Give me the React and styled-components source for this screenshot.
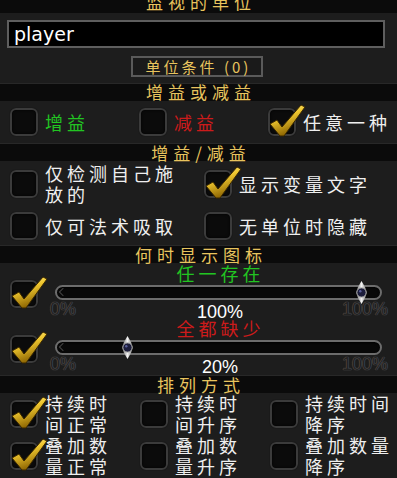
import React from "react"
import styled, { createGlobalStyle } from "styled-components"

const GlobalStyle = createGlobalStyle`
  html, body {
    margin: 0;
    padding: 0;
    background: #1d1d1d;
    overflow: hidden;
  }
  body {
    font-family: "Noto Sans CJK SC", "Noto Sans", sans-serif;
  }
`

const colors = {
  gold: "#e8c45e",
  white: "#efefef",
  green: "#22c422",
  red: "#cc1b1b",
  band: "#0b0b0b",
  box: "#0b0b0b"
}

const Page = styled.div`
  width: 397px;
  height: 478px;
  overflow: hidden;
  background: #1d1d1d;
  .inner {
    margin-top: -5px;
  }
`

const Header = styled.div`
  height: 18px;
  background: ${colors.band};
  border-top: 1px solid #282828;
  box-sizing: border-box;
  display: flex;
  justify-content: center;
  align-items: center;
  color: ${colors.gold};
  font-size: 17px;
  line-height: 17px;
  letter-spacing: 5px;
  padding-left: 5px;
  white-space: nowrap;
  margin-top: ${({ gap }) => gap || 0}px;
  span {
    position: relative;
    top: ${({ shift }) => shift || 0}px;
  }
`

const TextInput = styled.div`
  margin: 7px 0 0 7px;
  width: 378px;
  height: 28px;
  box-sizing: border-box;
  background: #000;
  border: 2px solid #5e5e5e;
  display: flex;
  align-items: center;
  padding-left: 5px;
  color: #fff;
  font-family: "DejaVu Sans", sans-serif;
  font-size: 19px;
`

const CondButton = styled.div`
  margin: 8px 0 0 131px;
  width: 132px;
  height: 21px;
  box-sizing: border-box;
  border: 2px solid #5a5a5a;
  background: #1a1a1a;
  color: ${colors.gold};
  font-size: 15px;
  letter-spacing: 3px;
  display: flex;
  align-items: center;
  justify-content: center;
  padding-left: 3px;
  white-space: nowrap;
`

const Grid = styled.div`
  display: grid;
  grid-template-columns: ${({ cols }) => cols};
  grid-auto-rows: ${({ rowH }) => rowH}px;
  padding-left: 10px;
`

const Cell = styled.div`
  display: flex;
  align-items: center;
  gap: 7px;
  padding-right: ${({ pr }) => pr || 0}px;
  min-width: 0;
`

const Label = styled.span`
  color: ${({ color }) => color || colors.white};
  font-size: 18px;
  line-height: 21px;
  letter-spacing: 4px;
  flex: 1;
  min-width: 0;
`

const Box = styled.span`
  position: relative;
  flex: none;
  width: 28px;
  height: 28px;
  box-sizing: border-box;
  border-radius: 6px;
  background: ${colors.box};
  border: 2px solid #3b3b3b;
  box-shadow: inset 0 0 3px #000, 0 0 1px #000;
  align-self: ${({ top }) => (top ? "flex-start" : "center")};
  margin-top: ${({ top }) => top || 0}px;
  svg {
    position: absolute;
    left: -1px;
    top: -8px;
  }
`

const CheckMark = () => (
  <svg width="38" height="37" viewBox="0 0 38 37">
    <defs>
      <linearGradient id="gold" x1="0" y1="0" x2="0.4" y2="1">
        <stop offset="0" stopColor="#fff6b0" />
        <stop offset="0.45" stopColor="#f0c830" />
        <stop offset="1" stopColor="#8a6200" />
      </linearGradient>
    </defs>
    <path
      d="M1 22 L8 18 L13 25 L32 3 L36 5 L15 34 L11 34 Z"
      fill="url(#gold)"
      stroke="#3a2800"
      strokeWidth="1"
      strokeLinejoin="round"
    />
  </svg>
)

const Check = ({ checked, top }) => (
  <Box top={top}>{checked && <CheckMark />}</Box>
)

const SliderRow = styled.div`
  display: flex;
  padding-left: 10px;
`

const SliderBlock = styled.div`
  flex: 1;
  margin: 0 15px 0 17px;
  display: flex;
  flex-direction: column;
`

const SliderTitle = styled.div`
  height: 20px;
  line-height: 20px;
  text-align: center;
  color: ${({ color }) => color};
  font-size: 18px;
  letter-spacing: 4px;
  padding-left: 4px;
  white-space: nowrap;
`

const Track = styled.div`
  position: relative;
  margin-top: 2px;
  height: 15px;
  box-sizing: border-box;
  border-radius: 8px;
  background: #080808;
  border: 2px solid #6c6c6c;
  box-shadow: inset 0 1px 2px #000;
  &::before {
    content: "";
    position: absolute;
    left: 3px;
    top: 2px;
    width: 5px;
    height: 5px;
    border-left: 1px solid #444;
    border-bottom: 1px solid #444;
    transform: rotate(45deg);
  }
  svg {
    position: absolute;
    top: -6px;
  }
`

const Thumb = () => (
  <svg width="13" height="23" viewBox="0 0 13 23">
    <defs>
      <linearGradient id="silver" x1="0" y1="0" x2="1" y2="0">
        <stop offset="0" stopColor="#6c6c6c" />
        <stop offset="0.5" stopColor="#f2f2f2" />
        <stop offset="1" stopColor="#7a7a7a" />
      </linearGradient>
    </defs>
    <path d="M6.5 0 L10 6 L12 11.5 L10 17 L6.5 23 L3 17 L1 11.5 L3 6 Z" fill="url(#silver)" />
    <circle cx="6.5" cy="11.5" r="4.6" fill="#1c1d3c" stroke="#9a9a9a" strokeWidth="1" />
    <circle cx="5.3" cy="10.3" r="1.2" fill="#5a5f9a" />
  </svg>
)

const Scale = styled.div`
  height: 18px;
  margin: 0 -6px 0 -5px;
  display: flex;
  justify-content: space-between;
  align-items: center;
  font-family: "Liberation Sans", Arial, sans-serif;
  font-size: 18px;
  .edge {
    color: #222;
    text-shadow: 0 0 1px #5e5e5e, 0 0 1px #5e5e5e;
    width: 46px;
  }
  .edge:last-child {
    text-align: right;
  }
  .value {
    color: #fff;
    position: relative;
    top: 3px;
    left: 1px;
  }
`

const Slider = ({ title, color, value }) => (
  <SliderRow>
    <Check checked top={17} />
    <SliderBlock>
      <SliderTitle color={color}>{title}</SliderTitle>
      <Track>
        <div style={{ position: "absolute", left: 5 + value * 2.93, top: 0 }}>
          <Thumb />
        </div>
      </Track>
      <Scale>
        <span className="edge">0%</span>
        <span className="value">{Math.round(value)}%</span>
        <span className="edge">100%</span>
      </Scale>
    </SliderBlock>
  </SliderRow>
)

const sortItems = [
  ["持续时间正常", true],
  ["持续时间升序", false],
  ["持续时间降序", false],
  ["叠加数量正常", true],
  ["叠加数量升序", false],
  ["叠加数量降序", false]
]

const App = () => (
  <Page>
    <GlobalStyle />
    <div className="inner">
      <Header shift={-3}>
        <span>监视的单位</span>
      </Header>
      <TextInput>player</TextInput>
      <CondButton>单位条件 (0)</CondButton>

      <Header gap={6} shift={-1}>
        <span>增益或减益</span>
      </Header>
      <Grid cols="129px 129px 1fr" rowH={42}>
        <Cell>
          <Check />
          <Label color={colors.green}>增益</Label>
        </Cell>
        <Cell>
          <Check />
          <Label color={colors.red}>减益</Label>
        </Cell>
        <Cell>
          <Check checked />
          <Label>任意一种</Label>
        </Cell>
      </Grid>

      <Header>
        <span>增益/减益</span>
      </Header>
      <Grid cols="194px 1fr" rowH={46}>
        <Cell pr={20}>
          <Check />
          <Label>仅检测自己施放的</Label>
        </Cell>
        <Cell>
          <Check checked />
          <Label>显示变量文字</Label>
        </Cell>
      </Grid>
      <Grid cols="194px 1fr" rowH={38}>
        <Cell pr={20}>
          <Check />
          <Label>仅可法术吸取</Label>
        </Cell>
        <Cell>
          <Check />
          <Label>无单位时隐藏</Label>
        </Cell>
      </Grid>

      <Header>
        <span>何时显示图标</span>
      </Header>
      <Slider title="任一存在" color={colors.green} value={100} />
      <Slider title="全都缺少" color={colors.red} value={20} />

      <Header gap={2}>
        <span>排列方式</span>
      </Header>
      <Grid cols="130px 130px 1fr" rowH={42}>
        {sortItems.map(([text, on], i) => (
          <Cell key={i} pr={i % 3 === 2 ? 0 : 8}>
            <Check checked={on} />
            <Label>{text}</Label>
          </Cell>
        ))}
      </Grid>
    </div>
  </Page>
)

export default App
